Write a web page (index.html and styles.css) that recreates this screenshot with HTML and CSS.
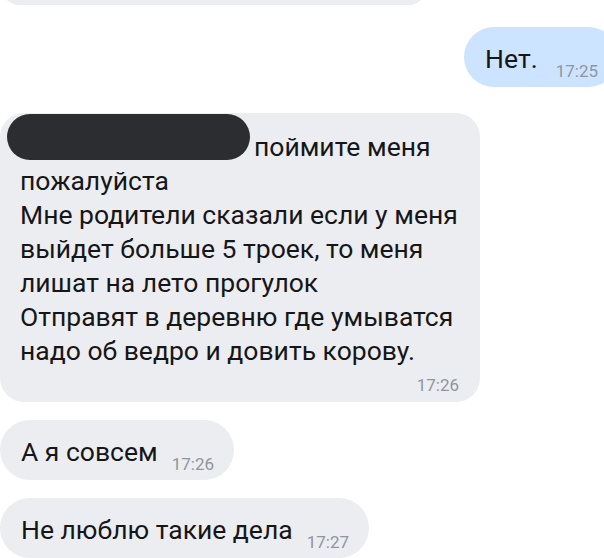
FILE: index.html
```html
<!DOCTYPE html>
<html lang="ru">
<head>
  <meta charset="UTF-8">
  <meta name="viewport" content="width=device-width, initial-scale=1.0">
  <title>Диалог</title>
  <link rel="stylesheet" href="styles.css">
</head>
<body>
  <div class="chat">
    <!-- previous message, scrolled off the top -->
    <div class="bubble cut"></div>

    <div class="bubble short mine">
      <span class="text">Нет.</span>
      <span class="time">17:25</span>
    </div>

    <div class="bubble long">
      <div class="text"><span class="redact"></span>поймите меня<br>
        пожалуйста<br>
        Мне родители сказали если у меня<br>
        выйдет больше 5 троек, то меня<br>
        лишат на лето прогулок<br>
        Отправят в деревню где умыватся<br>
        надо об ведро и довить корову.</div>
      <div class="time">17:26</div>
    </div>

    <div class="bubble short">
      <span class="text">А я совсем</span>
      <span class="time">17:26</span>
    </div>

    <div class="bubble short">
      <span class="text">Не люблю такие дела</span>
      <span class="time">17:27</span>
    </div>
  </div>
</body>
</html>
```

FILE: styles.css
```css
html, body {
  margin: 0;
  overflow: hidden;
  background: #fff;
}
body {
  font-family: Roboto, "Noto Sans", sans-serif;
  color: #161618;
}
.chat {
  display: flex;
  flex-direction: column;
  align-items: flex-start;
}
.bubble {
  background: #ebedf0;
  border-radius: 30px;
  box-sizing: border-box;
}
.bubble.cut {
  width: 428px;
  height: 40px;
  margin-top: -35px;
}
.bubble.short {
  display: flex;
  align-items: center;
  height: 60px;
  padding: 4px 20px 0 21px;
  margin-top: 18px;
}
.text {
  font-size: 26.5px;
  line-height: 34px;
}
.bubble.short .time {
  align-self: flex-end;
  margin: 0 0 7px 14px;
}
.bubble.mine {
  align-self: flex-end;
  background: #cce4ff;
  margin-top: 22px;
  margin-right: -14px;
}
.bubble.mine .time {
  margin-left: 18px;
}
.bubble.long {
  width: 480px;
  margin-top: 26px;
  padding: 17px 21px 6px 20px;
  border-radius: 24px;
}
.bubble.long .time {
  text-align: right;
  line-height: 22px;
  margin-top: 6px;
}
.time {
  font-size: 17px;
  line-height: 17px;
  color: #8f969e;
}
.redact {
  display: inline-block;
  width: 243px;
  height: 46px;
  margin: -20px 4px -4px -13px;
  background: #2b2d31;
  border-radius: 23px;
}
```
